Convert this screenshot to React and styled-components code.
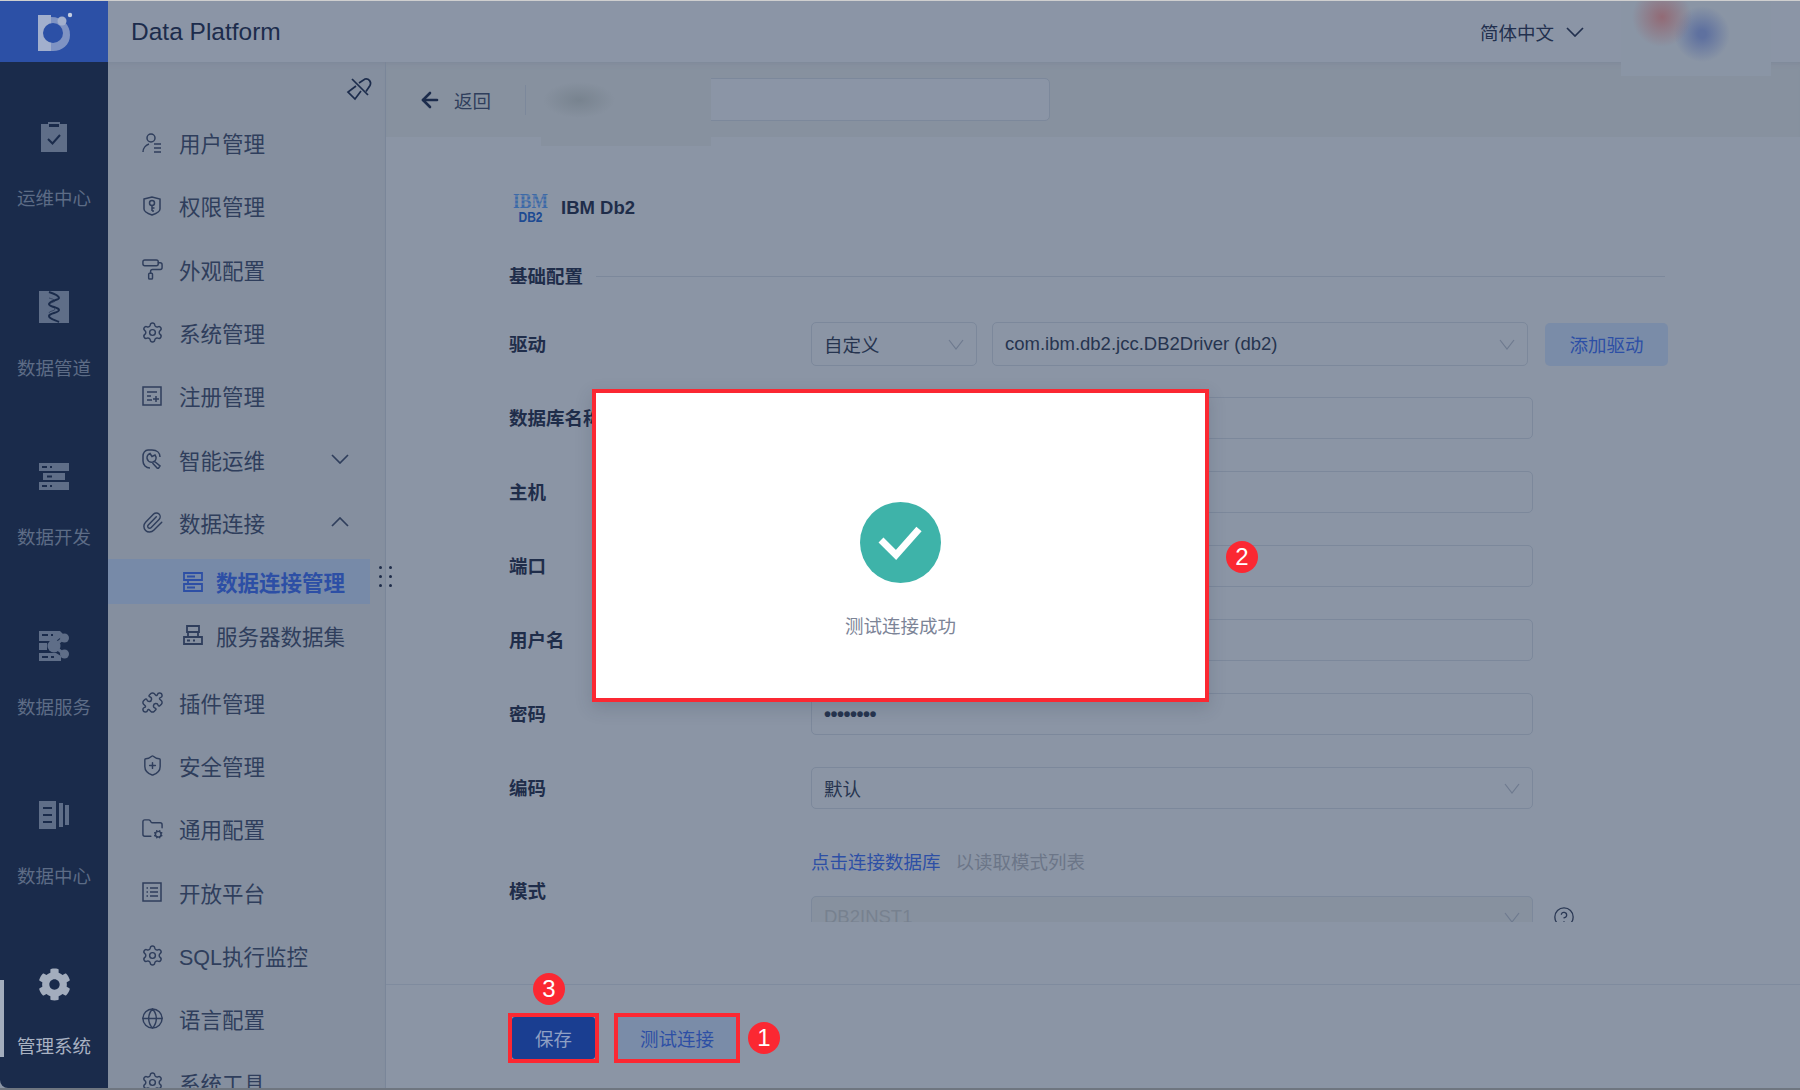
import React from 'react';
import styled, { createGlobalStyle } from 'styled-components';
import {
  ArrowLeft, CircleHelp, FolderCog, Globe, PaintRoller,
  Paperclip, Puzzle, Settings, ShieldPlus,
} from 'lucide-react';
import { FaCog } from 'react-icons/fa';

const SANS = `"Liberation Sans", "Noto Sans CJK SC", sans-serif`;
const INK = '#2f3e5c';
const LINE = '#7c889b';
const BRAND = '#2d4fa5';
const RED = '#fb2832';

const GlobalStyle = createGlobalStyle`
  html, body { margin: 0; padding: 0; background: #8b95a5; }
  body { font-family: ${SANS}; }
  * { box-sizing: border-box; }
`;

const Page = styled.div`
  position: relative;
  width: 1800px;
  height: 1090px;
  overflow: hidden;
  display: flex;
  flex-direction: column;
  background: #8b95a5;
  border-top: 1px solid #cfcfcf;
  border-bottom: 2px solid #6f7680;
`;

const Header = styled.header`
  position: relative;
  z-index: 2;
  flex: none;
  height: 61px;
  display: flex;
  align-items: center;
  background: #8b95a6;
`;

const LogoBox = styled.div`
  width: 108px;
  height: 100%;
  display: flex;
  align-items: center;
  justify-content: center;
  background: #2c50a6;
`;

const Product = styled.div`
  margin-left: 23px;
  font-size: 24.5px;
  color: #1c2c4c;
`;

const Lang = styled.div`
  margin-left: auto;
  margin-right: 216px;
  display: flex;
  align-items: center;
  gap: 12px;
  font-size: 18.5px;
  color: #22304e;
`;

const AvatarBlur = styled.div`
  position: absolute;
  left: 1621px;
  top: -1px;
  width: 150px;
  height: 76px;
  background:
    radial-gradient(circle at 41px 17px, #926a75 0, rgba(146, 106, 117, 0) 30px),
    radial-gradient(circle at 81px 34px, #5f719f 0, #5f719f 4px, rgba(95, 113, 159, 0) 28px),
    #8a95a5;
`;

const Body = styled.div`
  flex: 1;
  min-height: 0;
  display: flex;
`;

const Rail = styled.nav`
  flex: none;
  width: 108px;
  padding-top: 10px;
  background: #1a2b4b;
  border-bottom-left-radius: 8px;
`;

const RailItem = styled.div`
  position: relative;
  height: 169.5px;
  padding-top: 43px;
  display: flex;
  flex-direction: column;
  align-items: center;
  color: ${p => (p.$active ? '#a3adbd' : '#5f6e88')};
`;

const RailIcon = styled.div`
  height: 44px;
  display: flex;
  align-items: center;
  justify-content: center;
`;

const RailText = styled.div`
  margin-top: 28px;
  font-size: 18.5px;
  line-height: 24px;
  color: ${p => (p.$active ? '#a9b2c2' : '#5d6c86')};
`;

const RailMark = styled.span`
  position: absolute;
  left: 0;
  top: 60px;
  width: 4px;
  height: 77px;
  background: #a3adbd;
`;

const Menu = styled.aside`
  position: relative;
  flex: none;
  width: 278px;
  padding-top: 49px;
  background: #858f9f;
  border-right: 1px solid #7a8699;
  box-shadow: inset 0 6px 6px -6px #7a8496;
`;

const PinButton = styled.div`
  position: absolute;
  top: 10px;
  left: 232px;
  color: #1c2c4c;
`;

const MenuRow = styled.div`
  height: 63.3px;
  padding-left: 34px;
  padding-right: 36px;
  display: flex;
  align-items: center;
  gap: 17px;
  font-size: 21.5px;
  color: ${INK};
`;

const IconSlot = styled.span`
  flex: none;
  width: 20px;
  height: 20px;
  display: flex;
  align-items: center;
  justify-content: center;
  svg { flex: none; }
`;

const Caret = styled.span`
  margin-left: auto;
  display: flex;
  color: ${INK};
`;

const SubRow = styled.div`
  width: 262px;
  height: 45px;
  margin-top: ${p => (p.$active ? '5px' : '8.5px')};
  margin-bottom: ${p => (p.$active ? '0' : '13px')};
  padding-left: 75px;
  display: flex;
  align-items: center;
  gap: 13px;
  font-size: 21.5px;
  font-weight: ${p => (p.$active ? 700 : 400)};
  color: ${p => (p.$active ? BRAND : INK)};
  background: ${p => (p.$active ? '#778aa8' : 'transparent')};
`;

const DragDots = styled.div`
  position: absolute;
  z-index: 1;
  top: 504px;
  left: 271px;
  display: grid;
  grid-template-columns: 3px 3px;
  column-gap: 7px;
  row-gap: 6px;
  span { width: 3px; height: 3px; border-radius: 50%; background: #1f2d4a; }
`;

const Content = styled.main`
  position: relative;
  flex: 1;
  min-width: 0;
  display: flex;
  flex-direction: column;
`;

const Toolbar = styled.div`
  position: relative;
  flex: none;
  height: 75px;
  padding-left: 32px;
  display: flex;
  align-items: center;
  background: #87919f;
  box-shadow: inset 0 6px 6px -6px #7a8496;
`;

const BackLink = styled.div`
  display: flex;
  align-items: center;
  gap: 12px;
  font-size: 18.5px;
  color: ${INK};
  svg { color: #1c2c4c; }
`;

const ToolDivider = styled.span`
  width: 1px;
  height: 30px;
  margin-left: 34px;
  background: #7c889b;
`;

const NameInput = styled.div`
  width: 507px;
  height: 43px;
  margin-left: 17px;
  border: 1px solid ${LINE};
  border-radius: 5px;
  background: #8b95a6;
`;

const NameBlur = styled.div`
  position: absolute;
  left: 155px;
  top: 13px;
  width: 170px;
  height: 71px;
  background:
    radial-gradient(ellipse 36px 18px at 38px 25px, #78838f 0, rgba(120, 131, 143, 0) 100%),
    #87919f;
`;

const FormScroll = styled.div`
  flex: none;
  height: 785px;
  padding-left: 123px;
  overflow: hidden;
`;

const SourceTitle = styled.div`
  height: 42px;
  margin-top: 50px;
  display: flex;
  align-items: center;
  gap: 13px;
  padding-left: 4px;
  font-size: 18.5px;
  font-weight: 700;
  color: #1f2d4a;
`;

const SectionHead = styled.div`
  height: 42px;
  margin-top: 26px;
  margin-bottom: 25px;
  width: 1156px;
  display: flex;
  align-items: center;
  gap: 13px;
  font-size: 18.5px;
  font-weight: 700;
  color: #1f2d4a;
  span { padding-bottom: 2px; }
  &::after { content: ''; flex: 1; height: 1px; background: ${LINE}; }
`;

const FormRow = styled.div`
  display: grid;
  grid-template-columns: 302px 1fr;
  align-items: center;
  margin-bottom: ${p => p.$gap ?? 32}px;
`;

const Label = styled.div`
  padding-bottom: 2px;
  font-size: 18.5px;
  font-weight: 700;
  color: #1f2d4a;
  white-space: nowrap;
`;

const Field = styled.div`
  width: ${p => p.$width ?? 722}px;
  height: ${p => p.$height ?? 42}px;
  margin-left: ${p => p.$offset ?? 0}px;
  padding: 0 12px;
  display: flex;
  align-items: center;
  justify-content: space-between;
  flex: none;
  border: 1px solid ${LINE};
  border-radius: 5px;
  font-size: 18.5px;
  color: ${p => (p.$faint ? '#77818f' : '#26344f')};
  background: ${p => (p.$faint ? '#87919f' : 'transparent')};
  svg { color: #6e7a8f; flex: none; }
`;

const DriverLine = styled.div`
  display: flex;
  align-items: center;
`;

const AddDriver = styled.div`
  width: 123px;
  height: 43px;
  margin-left: 17px;
  display: flex;
  align-items: center;
  justify-content: center;
  border-radius: 5px;
  font-size: 18.5px;
  color: ${BRAND};
  background: #7a8ca8;
`;

const Dots = styled.span`
  font-size: 20px;
  letter-spacing: -0.5px;
  font-weight: 700;
`;

const ModeLabel = styled(Label)`
  padding-bottom: 9px;
`;

const HintLine = styled.div`
  height: 24px;
  margin-bottom: 21px;
  display: flex;
  gap: 15px;
  font-size: 18.5px;
  line-height: 24px;
  color: #6c7688;
`;

const HintLink = styled.span`
  color: ${BRAND};
`;

const ModeLine = styled.div`
  display: flex;
  align-items: center;
  gap: 20px;
  svg.help { color: #2a3854; }
`;

const Footer = styled.footer`
  flex: none;
  margin-top: 62px;
  padding: 28px 0 0 122px;
  border-top: 1px solid #7f8b9e;
  display: flex;
  align-items: center;
  gap: 15px;
`;

const Marked = styled.div`
  position: relative;
  border: 4px solid ${RED};
`;

const ActionButton = styled.div`
  width: ${p => p.$width}px;
  height: 42px;
  display: flex;
  align-items: center;
  justify-content: center;
  font-size: 18.5px;
  border-radius: ${p => (p.$primary ? '3px' : '0')};
  color: ${p => (p.$primary ? '#8fa0c4' : BRAND)};
  background: ${p => (p.$primary ? '#1a3e91' : '#7a8ca8')};
`;

const StepBadge = styled.div`
  width: 32px;
  height: 32px;
  flex: none;
  display: flex;
  align-items: center;
  justify-content: center;
  border-radius: 50%;
  font-size: 24px;
  color: #fff;
  background: ${RED};
`;

const FooterBadge = styled(StepBadge)`
  margin-left: -7px;
`;

const SaveBadge = styled(StepBadge)`
  position: absolute;
  left: 21px;
  top: -44px;
`;

const ModalBadge = styled(StepBadge)`
  position: absolute;
  right: -53px;
  top: 148px;
`;

const Modal = styled.div`
  position: absolute;
  z-index: 5;
  left: 592px;
  top: 388px;
  width: 617px;
  height: 313px;
  padding-top: 109px;
  display: flex;
  flex-direction: column;
  align-items: center;
  background: #fff;
  border: 4px solid ${RED};
  box-shadow: 0 6px 16px rgba(40, 50, 70, 0.18);
`;

const ModalText = styled.div`
  margin-top: 31px;
  font-size: 18.5px;
  line-height: 26px;
  color: #7c8497;
`;

const BrandLogo = () => (
  <svg width="46" height="42" viewBox="0 0 46 42">
    <path d="M7 4h13v36H7z" fill="#a2afcd" />
    <path d="M20 6c12 0 19 8 19 18 0 10-8 16-17 16-1 0-2 0-2 0z" fill="#7f93c3" />
    <circle cx="22" cy="22" r="10" fill="#2c50a6" />
    <circle cx="31" cy="10" r="4.500" fill="#a2afcd" />
    <circle cx="39" cy="4" r="2.200" fill="#c5cee0" />
  </svg>
);

const Chevron = ({ up, width = 16, height = 11, weight = 1.2 }) => (
  <svg width={width} height={height} viewBox={`0 0 ${width} ${height}`} fill="none" stroke="currentColor" strokeWidth={weight}>
    <path d={up
      ? `M1 ${height - 1}L${width / 2} 1L${width - 1} ${height - 1}`
      : `M1 1L${width / 2} ${height - 1}L${width - 1} 1`} />
  </svg>
);

const Clipboard = () => (
  <svg width="26" height="30" viewBox="0 0 26 30">
    <path d="M0 2h7V0h12v2h7v28H0z M8 2v3h10V2z" fill="currentColor" fillRule="evenodd" />
    <path d="M7 17l4.500 4.500L19 13" stroke="#1a2b4b" strokeWidth="2" fill="none" />
  </svg>
);

const Pipeline = () => (
  <svg width="30" height="32" viewBox="0 0 30 32">
    <path d="M0 0h30v32H0z" fill="currentColor" />
    <path d="M10 1c6 2 10 4 10 6s-10 3-10 6 10 3 10 6-10 3-10 6 6 4 10 6" stroke="#1a2b4b" strokeWidth="2" fill="none" />
    <path d="M10 7c4 1 6 2 6 3s-6 2-6 4 6 2 6 4-6 2-6 4" stroke="#1a2b4b" strokeWidth="1" fill="none" opacity=".6" />
  </svg>
);

const Servers = () => (
  <svg width="30" height="27" viewBox="0 0 30 27">
    <path d="M0 0h30v8H0zM4 10h22v7H4zM0 19h30v8H0z" fill="currentColor" />
    <path d="M3 4h5M11 4h2M8 13.500h5M3 23h5M11 23h2" stroke="#1a2b4b" strokeWidth="2" />
  </svg>
);

const DataService = () => (
  <svg width="30" height="30" viewBox="0 0 30 30">
    <path d="M0 0h21l4 4-8 6H0zM0 12h8v7H0zM0 22h17l5 3v5H0z" fill="currentColor" />
    <path d="M3 4h6M12 4h2M3 26h6M12 26h3" stroke="#1a2b4b" strokeWidth="2" />
    <path d="M15 15l10-8M15 15l10 8" stroke="currentColor" strokeWidth="3" />
    <circle cx="15" cy="15" r="6.500" fill="currentColor" />
    <circle cx="25.500" cy="7" r="4.500" fill="currentColor" />
    <circle cx="25.500" cy="23" r="4.500" fill="currentColor" />
  </svg>
);

const DataCenter = () => (
  <svg width="30" height="30" viewBox="0 0 30 30">
    <path d="M0 1h17v28H0zM20 3h4v24h-4zM26 5h4v20h-4z" fill="currentColor" />
    <path d="M4 8h9M4 15h9M4 22h9" stroke="#1a2b4b" strokeWidth="2" />
  </svg>
);

const Pin = () => (
  <svg width="36" height="36" viewBox="0 0 36 36" fill="none" stroke="currentColor" strokeWidth="1.700">
    <path d="M12 7l16 16" />
    <path d="M19 11l6-4a4.500 4.500 0 0 1 5 6.500l-4 6" />
    <path d="M16 14l-8 6 7 7 6-8" />
  </svg>
);

const Line = ({ children }) => (
  <svg width="20" height="20" viewBox="0 0 20 20" fill="none" stroke={INK} strokeWidth="1.500">
    {children}
  </svg>
);

const UserIcon = () => (
  <Line>
    <circle cx="9" cy="5" r="4" />
    <path d="M1 19c0-4 3-7 6-8M12 11h7M12 15h7M12 19h7" />
  </Line>
);
const ShieldKey = () => (
  <Line>
    <path d="M2 3l8-2 8 2v10c0 3-5 5-8 6-3-1-8-3-8-6z" />
    <circle cx="10" cy="7" r="2.500" />
    <path d="M10 9.500V15M10 12h2.500M10 15h2" />
  </Line>
);
const RegisterIcon = () => (
  <Line>
    <rect x="1" y="1" width="18" height="18" />
    <path d="M5 6h10M5 14h5M5 10h4M14 10v6M11 13h6" />
  </Line>
);
const WrenchIcon = () => (
  <Line>
    <path d="M18 8c0-4-3-7-8-7H6C3 1 1 4 1 7v5c0 4 3 7 7 7" />
    <path d="M14 8a4.500 4.500 0 1 1-6-3.500l2 3 3-1.500zM12 12l6 5-2 3-5.500-6" />
  </Line>
);
const ListIcon = () => (
  <Line>
    <rect x="1" y="1" width="18" height="18" />
    <path d="M4.500 6h1.500M8 6h8M4.500 10h1.500M8 10h8M4.500 14h1.500M8 14h8" />
  </Line>
);
const ServerLine = ({ narrow }) => (
  <svg width="20" height="20" viewBox="0 0 20 20" fill="none" stroke="currentColor" strokeWidth="1.800">
    <path d={narrow
      ? 'M4 1h12v6H4zM1 12h18v7H1zM5 7v5M15 7v5M4 15.500h3M10 15.500h2'
      : 'M1 1h18v7H1zM1 12h18v7H1zM5 8v4M4 4.500h8M4 15.500h8'} />
  </svg>
);

const iconProps = { size: 23, strokeWidth: 1.5, color: INK };
const Caret22 = ({ up }) => <Chevron up={up} width={18} height={10} weight={1.700} />;

const RAIL = [
  { label: '运维中心', Icon: Clipboard },
  { label: '数据管道', Icon: Pipeline },
  { label: '数据开发', Icon: Servers },
  { label: '数据服务', Icon: DataService },
  { label: '数据中心', Icon: DataCenter },
];

const MENU_TOP = [
  { label: '用户管理', icon: <UserIcon /> },
  { label: '权限管理', icon: <ShieldKey /> },
  { label: '外观配置', icon: <PaintRoller {...iconProps} /> },
  { label: '系统管理', icon: <Settings {...iconProps} /> },
  { label: '注册管理', icon: <RegisterIcon /> },
  { label: '智能运维', icon: <WrenchIcon />, caret: <Caret22 /> },
  { label: '数据连接', icon: <Paperclip {...iconProps} />, caret: <Caret22 up /> },
];

const MENU_BOTTOM = [
  { label: '插件管理', icon: <Puzzle {...iconProps} /> },
  { label: '安全管理', icon: <ShieldPlus {...iconProps} /> },
  { label: '通用配置', icon: <FolderCog {...iconProps} /> },
  { label: '开放平台', icon: <ListIcon /> },
  { label: 'SQL执行监控', icon: <Settings {...iconProps} /> },
  { label: '语言配置', icon: <Globe {...iconProps} /> },
  { label: '系统工具', icon: <Settings {...iconProps} /> },
];

const PLAIN_FIELDS = ['数据库名称', '主机', '端口', '用户名'];

const renderMenuRow = item => (
  <MenuRow key={item.label}>
    <IconSlot>{item.icon}</IconSlot>
    <span>{item.label}</span>
    {item.caret && <Caret>{item.caret}</Caret>}
  </MenuRow>
);

const App = () => (
  <Page>
    <GlobalStyle />
    <Header>
      <LogoBox><BrandLogo /></LogoBox>
      <Product>Data Platform</Product>
      <Lang>简体中文<Chevron width={18} height={10} weight={1.700} /></Lang>
      <AvatarBlur />
    </Header>
    <Body>
      <Rail>
        {RAIL.map(({ label, Icon }) => (
          <RailItem key={label}>
            <RailIcon><Icon /></RailIcon>
            <RailText>{label}</RailText>
          </RailItem>
        ))}
        <RailItem $active>
          <RailMark />
          <RailIcon><FaCog size={33} /></RailIcon>
          <RailText $active>管理系统</RailText>
        </RailItem>
      </Rail>
      <Menu>
        <PinButton><Pin /></PinButton>
        {MENU_TOP.map(renderMenuRow)}
        <SubRow $active><ServerLine />数据连接管理</SubRow>
        <SubRow><ServerLine narrow />服务器数据集</SubRow>
        {MENU_BOTTOM.map(renderMenuRow)}
        <DragDots><span /><span /><span /><span /><span /><span /></DragDots>
      </Menu>
      <Content>
        <Toolbar>
          <BackLink><ArrowLeft size={24} strokeWidth={2.6} />返回</BackLink>
          <ToolDivider />
          <NameInput />
          <NameBlur />
        </Toolbar>
        <FormScroll>
          <SourceTitle>
            <svg width="35" height="36" viewBox="0 0 35 36">
              <text x="0" y="18" textLength="35" lengthAdjust="spacingAndGlyphs" fontFamily="Liberation Serif" fontWeight="700" fontSize="22" fill="#3d6aa8">IBM</text>
              <text x="5.500" y="32" textLength="24" lengthAdjust="spacingAndGlyphs" fontFamily="Liberation Sans" fontSize="14" fill="#1d4a92">DB2</text>
              <path d="M0 6h35M0 10h35M0 14h35" stroke="#8b95a5" strokeWidth=".8" />
            </svg>
            IBM Db2
          </SourceTitle>
          <SectionHead><span>基础配置</span></SectionHead>
          <FormRow $gap={31}>
            <Label>驱动</Label>
            <DriverLine>
              <Field $width={166} $height={44}>自定义<Chevron /></Field>
              <Field $width={536} $height={44} $offset={15}>
                com.ibm.db2.jcc.DB2Driver (db2)<Chevron />
              </Field>
              <AddDriver>添加驱动</AddDriver>
            </DriverLine>
          </FormRow>
          {PLAIN_FIELDS.map(label => (
            <FormRow key={label}>
              <Label>{label}</Label>
              <Field />
            </FormRow>
          ))}
          <FormRow>
            <Label>密码</Label>
            <Field><Dots>••••••••</Dots></Field>
          </FormRow>
          <FormRow $gap={42}>
            <Label>编码</Label>
            <Field>默认<Chevron /></Field>
          </FormRow>
          <FormRow $gap={0}>
            <ModeLabel>模式</ModeLabel>
            <div>
              <HintLine><HintLink>点击连接数据库</HintLink>以读取模式列表</HintLine>
              <ModeLine>
                <Field $faint>DB2INST1<Chevron /></Field>
                <CircleHelp className="help" size={22} strokeWidth={1.4} />
              </ModeLine>
            </div>
          </FormRow>
        </FormScroll>
        <Footer>
          <Marked>
            <ActionButton $primary $width={83}>保存</ActionButton>
            <SaveBadge>3</SaveBadge>
          </Marked>
          <Marked>
            <ActionButton $width={118}>测试连接</ActionButton>
          </Marked>
          <FooterBadge>1</FooterBadge>
        </Footer>
      </Content>
    </Body>
    <Modal>
      <svg width="81" height="81" viewBox="0 0 81 81">
        <circle cx="40.500" cy="40.500" r="40.500" fill="#3eb3a9" />
        <path d="M21 38l15 15 23-26" fill="none" stroke="#fff" strokeWidth="7" />
      </svg>
      <ModalText>测试连接成功</ModalText>
      <ModalBadge>2</ModalBadge>
    </Modal>
  </Page>
);

export default App;
